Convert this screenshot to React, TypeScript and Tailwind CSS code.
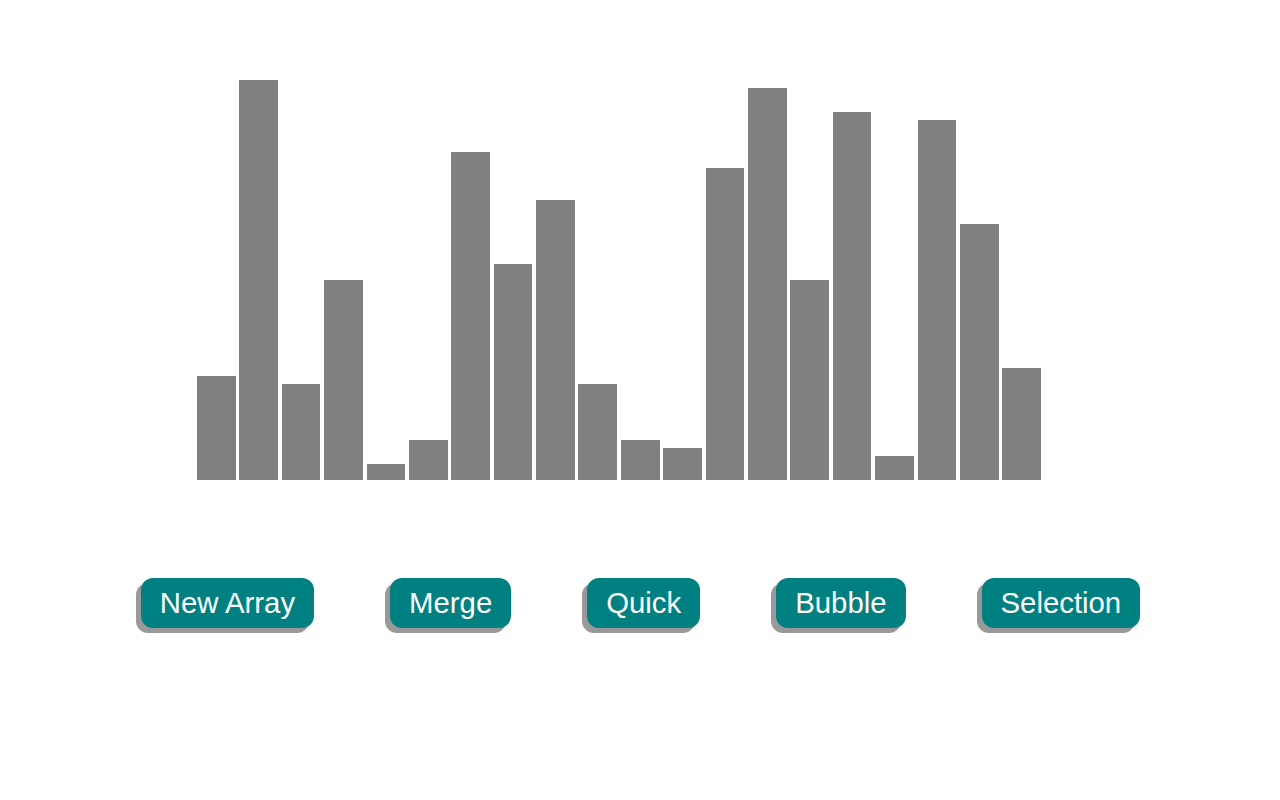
const values = [26, 100, 24, 50, 4, 10, 82, 54, 70, 24, 10, 8, 78, 98, 50, 92, 6, 90, 64, 28];

const buttons = ['New Array', 'Merge', 'Quick', 'Bubble', 'Selection'];

export default function App() {
  return (
    <div className="min-h-[800px] w-full bg-white font-['Liberation_Sans',Arial,sans-serif]">
      {/* bars */}
      <div className="ml-[197px] pt-[80px]">
        <div className="grid h-[400px] w-[844px] grid-cols-20 items-end gap-x-[3.75px]">
          {values.map((v, i) => (
            <div key={i} className="bg-[#808080]" style={{ height: v * 4 }} />
          ))}
        </div>
      </div>

      {/* controls */}
      <div className="mt-[98px] flex justify-center gap-[76px] pl-[1px]">
        {buttons.map((label) => (
          <button
            key={label}
            className="h-[50px] rounded-[12px] bg-[#008080] px-[19px] text-[29.33px] leading-none text-white shadow-[-5px_5px_0_#999999]"
          >
            {label}
          </button>
        ))}
      </div>
    </div>
  );
}
